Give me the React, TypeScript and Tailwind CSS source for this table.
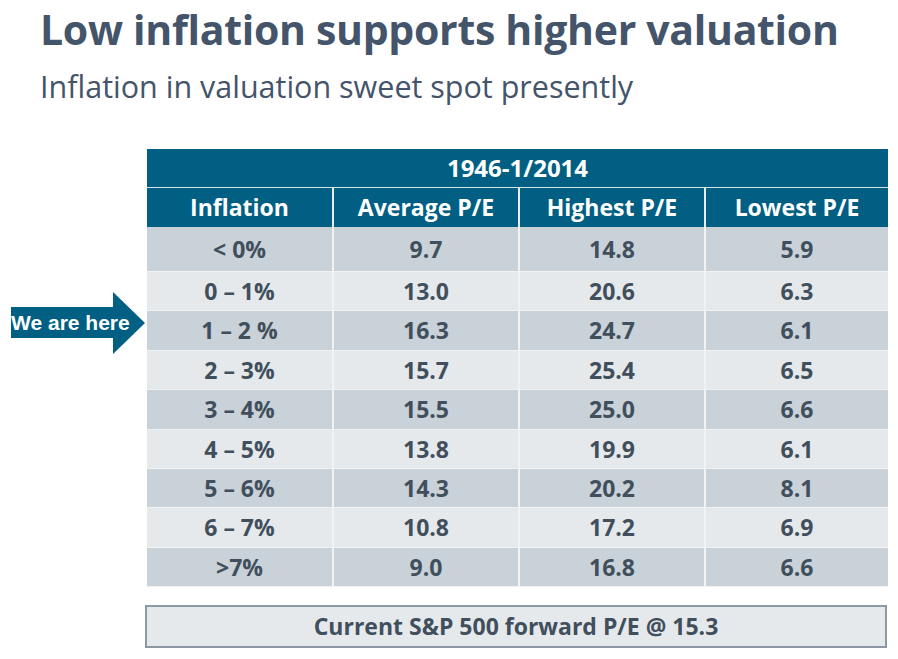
const rows = [
  ["< 0%", "9.7", "14.8", "5.9"],
  ["0 – 1%", "13.0", "20.6", "6.3"],
  ["1 – 2 %", "16.3", "24.7", "6.1"],
  ["2 – 3%", "15.7", "25.4", "6.5"],
  ["3 – 4%", "15.5", "25.0", "6.6"],
  ["4 – 5%", "13.8", "19.9", "6.1"],
  ["5 – 6%", "14.3", "20.2", "8.1"],
  ["6 – 7%", "10.8", "17.2", "6.9"],
  [">7%", "9.0", "16.8", "6.6"],
];

const headers = ["Inflation", "Average P/E", "Highest P/E", "Lowest P/E"];

function Arrow() {
  return (
    <div className="relative w-[135px] h-[62px] ml-[11px] mt-[143px]">
      <svg width="135" height="62" viewBox="0 0 135 62" className="absolute inset-0">
        <polygon points="0,15 102,15 102,0 134,31 102,62 102,46 0,46" fill="#005f83" />
      </svg>
      <span className="absolute left-0 top-[20px] text-[21px] leading-none font-bold text-white font-['Liberation_Sans',Arial,sans-serif] whitespace-nowrap">
        We are here
      </span>
    </div>
  );
}

export default function App() {
  return (
    <div className="w-[898px] h-[659px] bg-white overflow-hidden font-['Open_Sans',sans-serif] text-[#3f5163]">
      <div className="pl-[40px] pt-[2px]">
        <h1 className="text-[41px] leading-[54px] font-bold text-[#44546a] tracking-[-0.3px]">
          Low inflation supports higher valuation
        </h1>
        <p className="text-[30.5px] leading-[40px] text-[#44546a] mt-[10px]">
          Inflation in valuation sweet spot presently
        </p>
      </div>

      <div className="flex mt-[43px]">
        <div className="w-[147px] shrink-0">
          <Arrow />
        </div>
        <div className="w-[741px] shrink-0">
          <div className="bg-[#005f83] h-[39px] flex items-center justify-center text-white font-bold text-[24px] border-b border-[#d8e2ea]">
            1946-1/2014
          </div>
          <div className="grid grid-cols-[185px_184px_184px_182px] gap-x-[2px] bg-[#e9edf1]">
            {headers.map((h) => (
              <div
                key={h}
                className="bg-[#005f83] h-[39px] flex items-center justify-center text-white font-bold text-[23px]"
              >
                {h}
              </div>
            ))}
          </div>
          <div className="flex flex-col gap-y-[1px] bg-[#f2f2f2] pb-[1px]">
            {rows.map((r, i) => (
              <div
                key={i}
                className={
                  "grid grid-cols-[185px_184px_184px_182px] gap-x-[2px] " +
                  (i === 0 ? "h-[44px] " : "h-[38.4px] ")
                }
              >
                {r.map((c, j) => (
                  <div
                    key={j}
                    className={
                      "flex items-center justify-center font-bold text-[23px] text-[#414f5c] " +
                      (i % 2 === 0 ? "bg-[#c9d1d9]" : "bg-[#e5e9ec]")
                    }
                  >
                    {c}
                  </div>
                ))}
              </div>
            ))}
          </div>
          <div className="mt-[18px] -ml-[2px] w-[742px] h-[43px] bg-[#e5e9ec] border-2 border-[#8c99a5] flex items-center justify-center font-bold text-[23px] text-[#414f5c]">
            Current S&amp;P 500 forward P/E @ 15.3
          </div>
        </div>
      </div>
    </div>
  );
}
